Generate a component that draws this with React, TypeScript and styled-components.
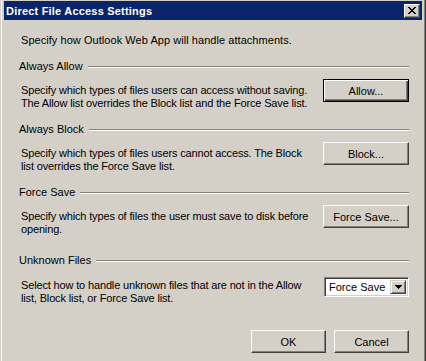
import React from 'react';
import styled, { createGlobalStyle } from 'styled-components';

const GlobalStyle = createGlobalStyle`
    html, body {
        margin: 0;
        padding: 0;
        background: #d4d0c8;
    }
    body {
        font-family: "Liberation Sans", Arial, sans-serif;
        font-size: 11px;
        color: #000;
    }
`;

const Frame = styled.div`
    width: 426px;
    height: 361px;
    box-sizing: border-box;
    background: #d4d0c8;
    border-left: 1px solid #d4d0c8;
    border-right: 1px solid #404040;
    overflow: hidden;
`;

const Inner = styled.div`
    height: 100%;
    box-sizing: border-box;
    border-left: 1px solid #ffffff;
    border-right: 1px solid #808080;
    padding: 1px 2px 0 2px;
    display: flex;
    flex-direction: column;
`;

const TitleBar = styled.div`
    height: 19px;
    background: #0a246a;
    display: flex;
    align-items: center;
    justify-content: space-between;
    padding: 0 2px 0 2px;
`;

const TitleText = styled.span`
    color: #fff;
    font-weight: bold;
    font-size: 11px;
    letter-spacing: 0.2px;
`;

const CloseButton = styled.div`
    width: 16px;
    height: 14px;
    box-sizing: border-box;
    background: #d4d0c8;
    border: 1px solid;
    border-color: #ffffff #404040 #404040 #ffffff;
    box-shadow: inset -1px -1px #808080;
    display: flex;
    align-items: center;
    justify-content: center;
`;

const Body = styled.div`
    padding: 14px 13px 0 15px;
    display: flex;
    flex-direction: column;
`;

const Intro = styled.div`
    line-height: 13px;
    padding-left: 2px;
    white-space: nowrap;
    letter-spacing: 0.05px;
`;

const Label = styled.div<{ $top: number }>`
    margin-top: ${p => p.$top}px;
    display: flex;
    align-items: center;
    line-height: 13px;
    white-space: nowrap;
`;

const Etched = styled.div`
    flex: 1;
    margin-left: 5px;
    border-top: 1px solid #808080;
    border-bottom: 1px solid #ffffff;
`;

const Row = styled.div<{ $top: number }>`
    margin-top: ${p => p.$top}px;
    display: flex;
    justify-content: space-between;
    align-items: flex-start;
`;

const Description = styled.div<{ $offset: number }>`
    margin-top: ${p => p.$offset}px;
    padding-left: 2px;
    line-height: 13px;
    white-space: nowrap;
    letter-spacing: -0.15px;
`;

const Button = styled.button<{ $default?: boolean; $width: number }>`
    width: ${p => p.$width}px;
    height: 23px;
    box-sizing: border-box;
    padding: 0;
    margin: 0;
    background: #d4d0c8;
    font-family: "Liberation Sans", Arial, sans-serif;
    font-size: 11px;
    color: #000;
    border: 1px solid;
    border-color: ${p => (p.$default ? '#000' : '#ffffff #404040 #404040 #ffffff')};
    box-shadow: ${p =>
        p.$default
            ? 'inset 1px 1px #ffffff, inset -1px -1px #404040, inset -2px -2px #808080'
            : 'inset -1px -1px #808080'};
    border-radius: 0;
`;

const Select = styled.div`
    width: 85px;
    height: 20px;
    box-sizing: border-box;
    background: #fff;
    border: 1px solid;
    border-color: #808080 #ffffff #ffffff #808080;
    box-shadow: inset 1px 1px #404040, inset -1px -1px #d4d0c8;
    display: flex;
    align-items: stretch;
    padding: 2px;
`;

const SelectText = styled.div`
    flex: 1;
    display: flex;
    align-items: center;
    padding-left: 2px;
    line-height: 13px;
    white-space: nowrap;
`;

const ArrowButton = styled.div`
    width: 16px;
    box-sizing: border-box;
    background: #d4d0c8;
    border: 1px solid;
    border-color: #d4d0c8 #404040 #404040 #d4d0c8;
    box-shadow: inset 1px 1px #ffffff, inset -1px -1px #808080;
    display: flex;
    align-items: center;
    justify-content: center;
`;

const Footer = styled.div`
    margin-top: 25px;
    display: flex;
    justify-content: flex-end;
    gap: 8px;
`;

const CloseIcon = () => (
    <svg width="8" height="7" viewBox="0 0 8 7" shapeRendering="crispEdges">
        <path d="M0 0h2v1h-2zM6 0h2v1h-2zM1 1h2v1h-2zM5 1h2v1h-2zM2 2h4v1h-4zM3 3h2v1h-2zM2 4h4v1h-4zM1 5h2v1h-2zM5 5h2v1h-2zM0 6h2v1h-2zM6 6h2v1h-2z" fill="#000" />
    </svg>
);

const DownArrow = () => (
    <svg width="7" height="4" viewBox="0 0 7 4" shapeRendering="crispEdges">
        <path d="M0 0h7v1h-7zM1 1h5v1h-5zM2 2h3v1h-3zM3 3h1v1h-1z" fill="#000" />
    </svg>
);

const App: React.FC = () => {
    return (
        <>
            <GlobalStyle />
            <Frame>
                <Inner>
                    <TitleBar>
                        <TitleText>Direct File Access Settings</TitleText>
                        <CloseButton>
                            <CloseIcon />
                        </CloseButton>
                    </TitleBar>
                    <Body>
                        <Intro>Specify how Outlook Web App will handle attachments.</Intro>

                        <Label $top={13}>
                            Always Allow
                            <Etched />
                        </Label>
                        <Row $top={6}>
                            <Description $offset={5}>
                                Specify which types of files users can access without saving.
                                <br />
                                The Allow list overrides the Block list and the Force Save list.
                            </Description>
                            <Button $default $width={86}>Allow...</Button>
                        </Row>

                        <Label $top={13}>
                            Always Block
                            <Etched />
                        </Label>
                        <Row $top={6}>
                            <Description $offset={5}>
                                Specify which types of files users cannot access. The Block
                                <br />
                                list overrides the Force Save list.
                            </Description>
                            <Button $width={86}>Block...</Button>
                        </Row>

                        <Label $top={13}>
                            Force Save
                            <Etched />
                        </Label>
                        <Row $top={6}>
                            <Description $offset={5}>
                                Specify which types of files the user must save to disk before
                                <br />
                                opening.
                            </Description>
                            <Button $width={86}>Force Save...</Button>
                        </Row>

                        <Label $top={18}>
                            Unknown Files
                            <Etched />
                        </Label>
                        <Row $top={10}>
                            <Description $offset={2}>
                                Select how to handle unknown files that are not in the Allow
                                <br />
                                list, Block list, or Force Save list.
                            </Description>
                            <Select>
                                <SelectText>Force Save</SelectText>
                                <ArrowButton>
                                    <DownArrow />
                                </ArrowButton>
                            </Select>
                        </Row>

                        <Footer>
                            <Button $width={75}>OK</Button>
                            <Button $width={75}>Cancel</Button>
                        </Footer>
                    </Body>
                </Inner>
            </Frame>
        </>
    );
};

export default App;
